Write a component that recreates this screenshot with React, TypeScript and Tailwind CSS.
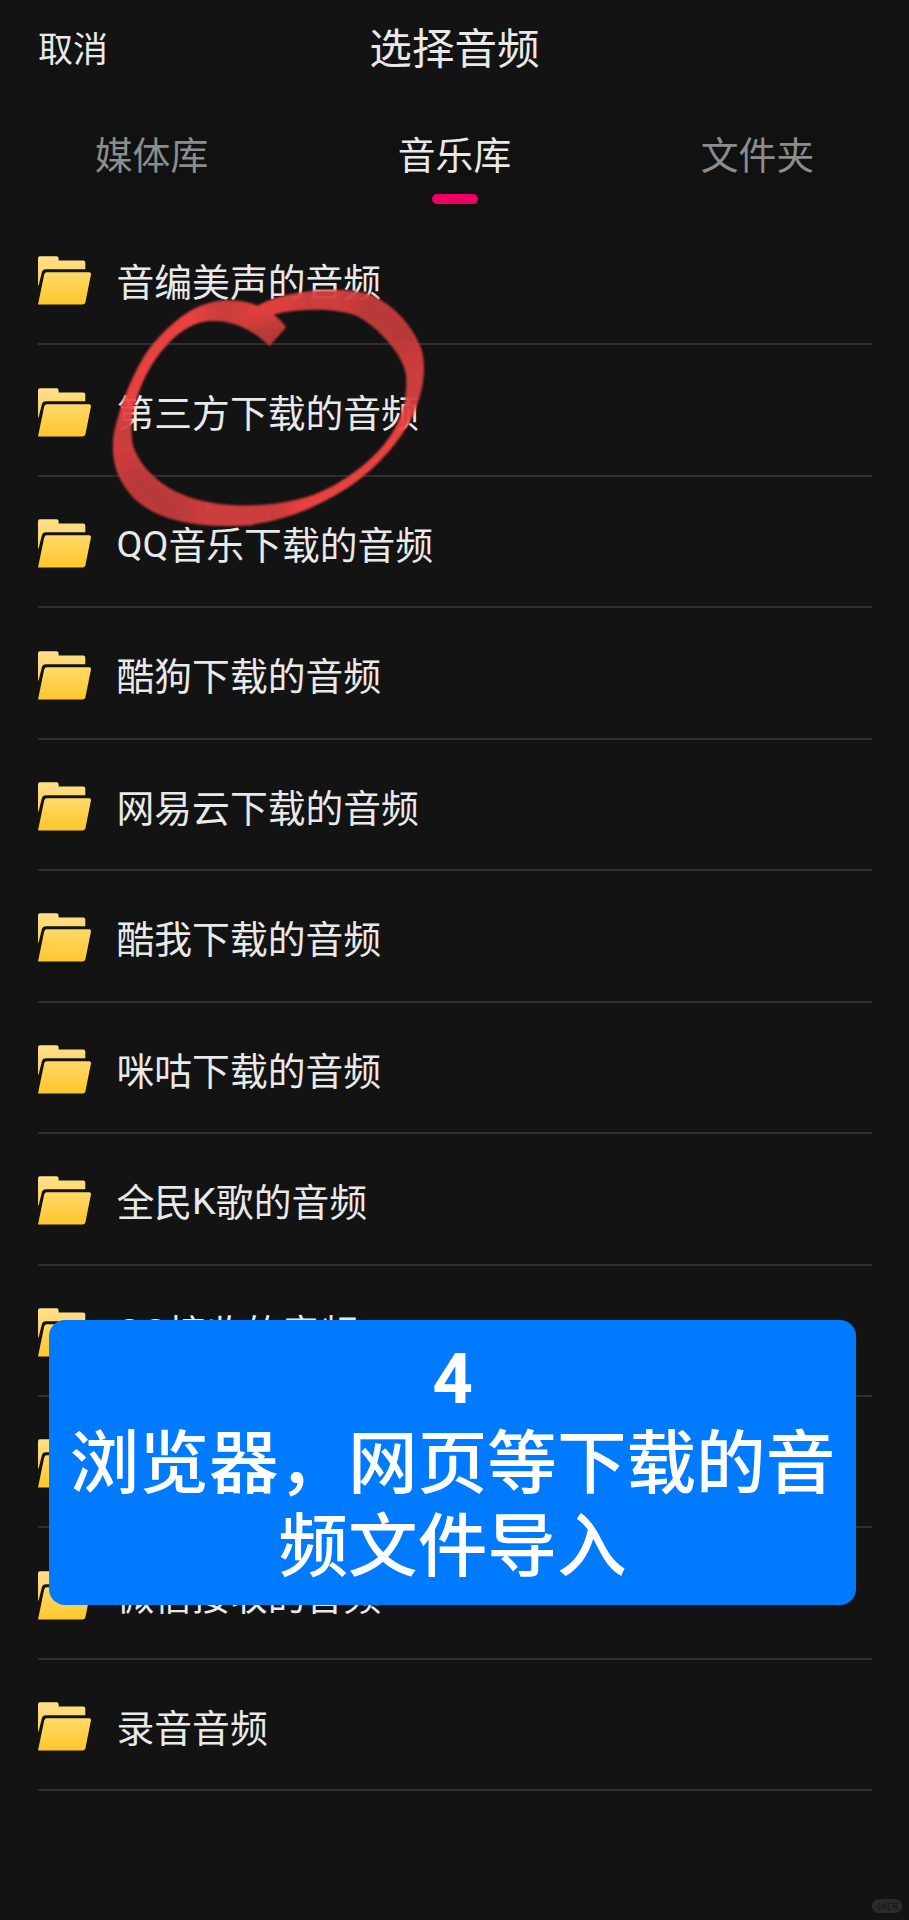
const folders = [
  '音编美声的音频',
  '第三方下载的音频',
  'QQ音乐下载的音频',
  '酷狗下载的音频',
  '网易云下载的音频',
  '酷我下载的音频',
  '咪咕下载的音频',
  '全民K歌的音频',
  'QQ接收的音频',
  '浏览器下载的音频',
  '微信接收的音频',
  '录音音频',
];

function FolderIcon() {
  return (
    <svg className="mt-[4px] block h-[49px] w-[54px] shrink-0" viewBox="0 0 54 49" aria-hidden="true">
      <defs>
        <linearGradient id="folderBack" x1="0" y1="0" x2="0" y2="1">
          <stop offset="0" stopColor="#ffe08a" />
          <stop offset="1" stopColor="#fcd05a" />
        </linearGradient>
        <linearGradient id="folderFront" x1="0" y1="0" x2="0" y2="1">
          <stop offset="0" stopColor="#ffd969" />
          <stop offset="1" stopColor="#ffc72c" />
        </linearGradient>
      </defs>
      <path
        d="M2 0.3H18.6Q20.6 0.3 20.6 2.3V4.5H45.2Q47.3 4.5 47.3 6.6V13.3H8Q4.6 13.3 3.8 16.5L0.6 29.5H0V2.3Q0 0.3 2 0.3Z"
        fill="url(#folderBack)"
      />
      <path
        d="M9 16.2H51Q53.4 16.2 52.9 18.7L47.4 46.2Q46.8 48.5 44.5 48.5H0L6.2 18.4Q6.8 16.2 9 16.2Z"
        fill="url(#folderFront)"
      />
    </svg>
  );
}

/** Sets Latin runs in Roboto and leaves the Chinese ones in the page's face. */
function FolderName({ name }: { name: string }) {
  return (
    <span className="mt-[2px] whitespace-nowrap">
      {name.split(/([A-Z]+)/).map((part, i) =>
        /[A-Z]/.test(part) ? (
          <span key={i} className="align-[2px] font-[Roboto,sans-serif] leading-[0]">
            {part}
          </span>
        ) : (
          part
        ),
      )}
    </span>
  );
}

function RedCircle() {
  return (
    <svg
      className="pointer-events-none absolute left-[110px] top-[280px] h-[250px] w-[320px]"
      viewBox="270 150 960 750"
      aria-hidden="true"
    >
      <defs>
        <clipPath id="brushShape">
          <path d="M798 292C765 245 700 209 620 210C520 213 440 290 385 360C330 440 290 560 280 620C270 700 300 770 360 820C430 875 540 890 640 888L700 886V826C650 828 600 824 560 815C450 795 370 730 340 650C322 570 350 480 395 405C440 335 500 276 570 273C640 270 700 300 748 348Z" />
          <path d="M640 888C760 885 880 840 980 775C1080 710 1160 610 1190 530C1215 460 1217 400 1205 360C1180 290 1120 220 1040 190C960 170 850 180 780 200C730 213 685 238 672 272C700 270 740 258 790 247C860 235 950 235 1010 257C1080 295 1150 375 1158 435C1162 500 1150 560 1110 620C1060 690 980 755 880 795C800 822 720 828 640 826Z" />
        </clipPath>
        <filter id="brushTone" x="-20%" y="-20%" width="140%" height="140%">
          <feGaussianBlur stdDeviation="24" />
        </filter>
        <filter id="brushEdge">
          <feGaussianBlur stdDeviation="2.5" />
        </filter>
      </defs>
      <g filter="url(#brushEdge)" opacity="0.95">
        <g clipPath="url(#brushShape)">
          <rect x="260" y="150" width="980" height="760" fill="#d63f3f" />
          <g filter="url(#brushTone)" fill="none" strokeWidth="85" strokeLinecap="round">
            <path d="M350 750Q410 825 470 840" stroke="#bf3a3b" />
            <path d="M1050 235Q1120 280 1150 330" stroke="#bf3a3b" />
            <path d="M730 295L790 340" stroke="#bf3a3b" />
            <path d="M330 520Q380 370 520 255" stroke="#f54443" />
            <path d="M840 835Q1060 750 1160 590" stroke="#f54443" />
            <path d="M690 255L800 220" strokeWidth="50" stroke="#f54443" />
          </g>
        </g>
      </g>
    </svg>
  );
}

export default function App() {
  return (
    <div
      lang="zh-CN"
      className="relative flex h-[1920px] w-[909px] flex-col overflow-hidden bg-[#131313] font-['Noto_Sans_CJK_SC','Noto_Sans',sans-serif] text-[#e9e9e9]"
    >
      <header className="grid h-[104px] grid-cols-[1fr_auto_1fr] items-center px-[38px] pb-[12px]">
        <button className="justify-self-start text-[35px] leading-none">取消</button>
        <h1 className="text-[42.6px] leading-none">选择音频</h1>
      </header>

      <nav className="grid h-[104px] grid-cols-3 bg-[#111111] text-[37.8px] leading-none">
        <button className="flex flex-col items-center pt-[30px] text-[#8c8c8c]">媒体库</button>
        <button className="flex flex-col items-center pt-[30px]">
          音乐库
          <span className="mt-[22px] h-[10px] w-[46px] rounded-full bg-[#ec0064]" />
        </button>
        <button className="flex flex-col items-center pt-[30px] text-[#8c8c8c]">文件夹</button>
      </nav>

      <ul className="mx-[37.5px] mt-[6px] grid h-[1577.4px] shrink-0 auto-rows-fr">
        {folders.map((name) => (
          <li
            key={name}
            className="flex min-h-0 items-center gap-[25px] border-b-2 border-[#2e2e2e] text-[37.8px] leading-none"
          >
            <FolderIcon />
            <FolderName name={name} />
          </li>
        ))}
      </ul>

      <RedCircle />

      <div className="absolute left-[49px] top-[1320px] flex h-[285px] w-[807px] flex-col items-center rounded-[16px] bg-[#007aff] pt-[17px] text-center text-[69.6px] leading-[83px] text-white">
        <p className="h-[79px] font-[Roboto,sans-serif] text-[71px] font-bold">4</p>
        <p className="whitespace-nowrap font-medium">浏览器，网页等下载的音</p>
        <p className="whitespace-nowrap font-medium">频文件导入</p>
      </div>

      <div className="absolute left-[872px] top-[1899px] flex h-[14px] w-[30px] items-center justify-center rounded-full bg-[#2b2b2b] text-[7.5px] leading-none text-[#0e0e0e]">
        小红书
      </div>
    </div>
  );
}
